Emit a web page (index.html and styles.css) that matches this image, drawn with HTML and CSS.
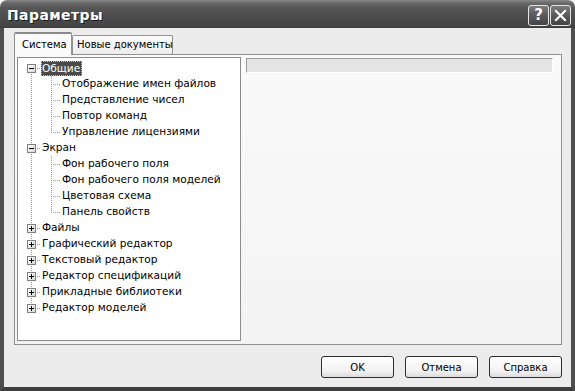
FILE: index.html
```html
<!DOCTYPE html>
<html lang="ru">
<head>
<meta charset="utf-8">
<title>Параметры</title>
<link rel="stylesheet" href="styles.css">
</head>
<body>
<div class="window">
  <div class="titlebar">
    <span class="title">Параметры</span>
    <div class="caption-btns">
      <span class="cbtn help">?</span>
      <span class="cbtn close"><svg width="13" height="13" viewBox="0 0 13 13"><path d="M2 2 L11 11 M11 2 L2 11" stroke="#fff" stroke-width="2.2" stroke-linecap="square"/></svg></span>
    </div>
  </div>
  <div class="client">
    <div class="tabs">
      <div class="tab active">Система</div>
      <div class="tab">Новые документы</div>
    </div>
    <div class="page">
      <div class="tree">
        <div class="row root first"><span class="g1"><span class="box minus"></span></span><span class="hc"></span><span class="label sel">Общие</span></div>
        <div class="row child"><span class="g1"></span><span class="sp"></span><span class="g2"></span><span class="label">Отображение имен файлов</span></div>
        <div class="row child"><span class="g1"></span><span class="sp"></span><span class="g2"></span><span class="label">Представление чисел</span></div>
        <div class="row child"><span class="g1"></span><span class="sp"></span><span class="g2"></span><span class="label">Повтор команд</span></div>
        <div class="row child lastchild"><span class="g1"></span><span class="sp"></span><span class="g2"></span><span class="label">Управление лицензиями</span></div>
        <div class="row root"><span class="g1"><span class="box minus"></span></span><span class="hc"></span><span class="label">Экран</span></div>
        <div class="row child"><span class="g1"></span><span class="sp"></span><span class="g2"></span><span class="label">Фон рабочего поля</span></div>
        <div class="row child"><span class="g1"></span><span class="sp"></span><span class="g2"></span><span class="label">Фон рабочего поля моделей</span></div>
        <div class="row child"><span class="g1"></span><span class="sp"></span><span class="g2"></span><span class="label">Цветовая схема</span></div>
        <div class="row child lastchild"><span class="g1"></span><span class="sp"></span><span class="g2"></span><span class="label">Панель свойств</span></div>
        <div class="row root"><span class="g1"><span class="box plus"></span></span><span class="hc"></span><span class="label">Файлы</span></div>
        <div class="row root"><span class="g1"><span class="box plus"></span></span><span class="hc"></span><span class="label">Графический редактор</span></div>
        <div class="row root"><span class="g1"><span class="box plus"></span></span><span class="hc"></span><span class="label">Текстовый редактор</span></div>
        <div class="row root"><span class="g1"><span class="box plus"></span></span><span class="hc"></span><span class="label">Редактор спецификаций</span></div>
        <div class="row root"><span class="g1"><span class="box plus"></span></span><span class="hc"></span><span class="label">Прикладные библиотеки</span></div>
        <div class="row root last"><span class="g1"><span class="box plus"></span></span><span class="hc"></span><span class="label">Редактор моделей</span></div>
      </div>
      <div class="right">
        <div class="bar"></div>
      </div>
    </div>
    <div class="buttons">
      <button class="btn">OK</button>
      <button class="btn">Отмена</button>
      <button class="btn">Справка</button>
    </div>
  </div>
</div>
</body>
</html>
```

FILE: styles.css
```css
html, body {
  margin: 0;
  padding: 0;
  background: #ffffff;
}

body {
  font-family: "DejaVu Sans", "Liberation Sans", sans-serif;
  font-size: 10px;
  color: #000;
}

.window {
  width: 575px;
  height: 391px;
  display: flex;
  flex-direction: column;
  border-radius: 7px 7px 0 0;
  overflow: hidden;
}

.titlebar {
  height: 28px;
  flex: 0 0 28px;
  display: flex;
  align-items: center;
  justify-content: space-between;
  background: linear-gradient(to bottom, #8a8a8a 0px, #6a6a6a 3px, #555555 8px, #4b4b4b 18px, #454545 26px, #3a3a3a 28px);
  padding: 0 4px 0 7px;
  box-sizing: border-box;
}

.title {
  color: #fff;
  font-family: "DejaVu Sans", sans-serif;
  font-weight: bold;
  font-size: 14px;
  letter-spacing: 0.4px;
  text-shadow: 1px 1px 0 #1e1e1e;
  margin-top: 1px;
}

.caption-btns {
  display: flex;
  gap: 1px;
  margin-top: 2px;
}

.cbtn {
  width: 19px;
  height: 19px;
  border: 1px solid #e6e6e6;
  border-radius: 3px;
  background: linear-gradient(to bottom, #7c7c7c, #5a5a5a 50%, #444 100%);
  display: flex;
  align-items: center;
  justify-content: center;
  color: #fff;
  font-family: "DejaVu Sans", sans-serif;
  font-weight: bold;
  font-size: 15px;
}

.client {
  flex: 1;
  background: #ececec;
  border-left: 4px solid #4e4e4e;
  border-right: 4px solid #4e4e4e;
  border-bottom: 4px solid #3e3e3e;
  padding: 4px 9px 9px 10px;
  display: flex;
  flex-direction: column;
}

.tabs {
  height: 22px;
  display: flex;
  align-items: flex-end;
}

.tab {
  height: 19px;
  box-sizing: border-box;
  border: 1px solid #919191;
  border-bottom: none;
  border-radius: 2px 2px 0 0;
  background: linear-gradient(to bottom, #fcfcfc, #ececec);
  padding: 3px 4px 0 4px;
  width: 101px;
  white-space: nowrap;
}

.tab.active {
  width: 58px;
  height: 23px;
  margin-bottom: -1px;
  padding: 5px 0 0 7px;
  background: #fafafa;
  position: relative;
  z-index: 1;
  border-top: 2px solid #8a8a8a;
}

.page {
  height: 291px;
  box-sizing: border-box;
  border: 1px solid #919191;
  background: linear-gradient(to bottom, #fafafa, #f3f3f3);
  padding: 2px 8px 3px 2px;
  display: flex;
  gap: 5px;
}

.tree {
  width: 224px;
  height: 284px;
  box-sizing: border-box;
  border: 1px solid #8c8c8c;
  background: #fff;
  padding: 2px 0 0 9px;
  font-size: 10.6px;
}

.row {
  height: 16px;
  display: flex;
  align-items: center;
}

.g1 {
  width: 9px;
  height: 16px;
  flex: 0 0 9px;
  display: flex;
  align-items: center;
  background-image: repeating-linear-gradient(to bottom, #9a9a9a 0 1px, transparent 1px 2px);
  background-size: 1px 16px;
  background-position: 4px 0;
  background-repeat: no-repeat;
}

.row.first .g1 {
  background-size: 1px 8px;
  background-position: 4px 8px;
}

.row.last .g1 {
  background-size: 1px 8px;
  background-position: 4px 0;
}

.hc {
  width: 5px;
  height: 16px;
  flex: 0 0 5px;
  background-image: repeating-linear-gradient(to right, #9a9a9a 0 1px, transparent 1px 2px);
  background-size: 4px 1px;
  background-position: 1px 8px;
  background-repeat: no-repeat;
}

.box {
  width: 9px;
  height: 9px;
  box-sizing: border-box;
  border: 1px solid #808080;
  background: linear-gradient(135deg, #ffffff, #d4d4d4);
  display: block;
  position: relative;
}

.box::before {
  content: "";
  display: block;
  width: 5px;
  height: 1px;
  background: #000;
  margin: 3px 0 0 1px;
}

.box.plus::after {
  content: "";
  display: block;
  width: 1px;
  height: 5px;
  background: #000;
  margin: -3px 0 0 3px;
}

.sp {
  width: 15px;
  flex: 0 0 15px;
}

.g2 {
  width: 10px;
  flex: 0 0 10px;
  height: 16px;
  background-image:
    repeating-linear-gradient(to bottom, #9a9a9a 0 1px, transparent 1px 2px),
    repeating-linear-gradient(to right, #9a9a9a 0 1px, transparent 1px 2px);
  background-size: 1px 16px, 9px 1px;
  background-position: 0 0, 0 8px;
  background-repeat: no-repeat;
}

.row.lastchild .g2 {
  background-size: 1px 9px, 9px 1px;
}

.label {
  padding: 0 2px 1px 1px;
  line-height: 13px;
  white-space: nowrap;
}

.label.sel {
  background: #4a4a4a;
  color: #fff;
  outline: 1px dotted #bdbdbd;
  outline-offset: -1px;
  padding: 1px 2px 1px 1px;
}

.right {
  flex: 1;
  padding-top: 1px;
}

.bar {
  height: 15px;
  box-sizing: border-box;
  background: #e4e4e4;
  border-top: 1px solid #9c9c9c;
  border-left: 1px solid #9c9c9c;
  border-right: 1px solid #ffffff;
  border-bottom: 1px solid #ffffff;
}

.buttons {
  margin-top: 11px;
  display: flex;
  justify-content: flex-end;
  gap: 11px;
}

.btn {
  width: 73px;
  height: 22px;
  box-sizing: border-box;
  border: 1px solid #2e2e2e;
  border-radius: 3px;
  background: linear-gradient(to bottom, #ffffff, #f2f2f2 70%, #dcdcdc);
  font-family: "DejaVu Sans", sans-serif;
  font-size: 10px;
  color: #000;
  padding: 0;
}
```
